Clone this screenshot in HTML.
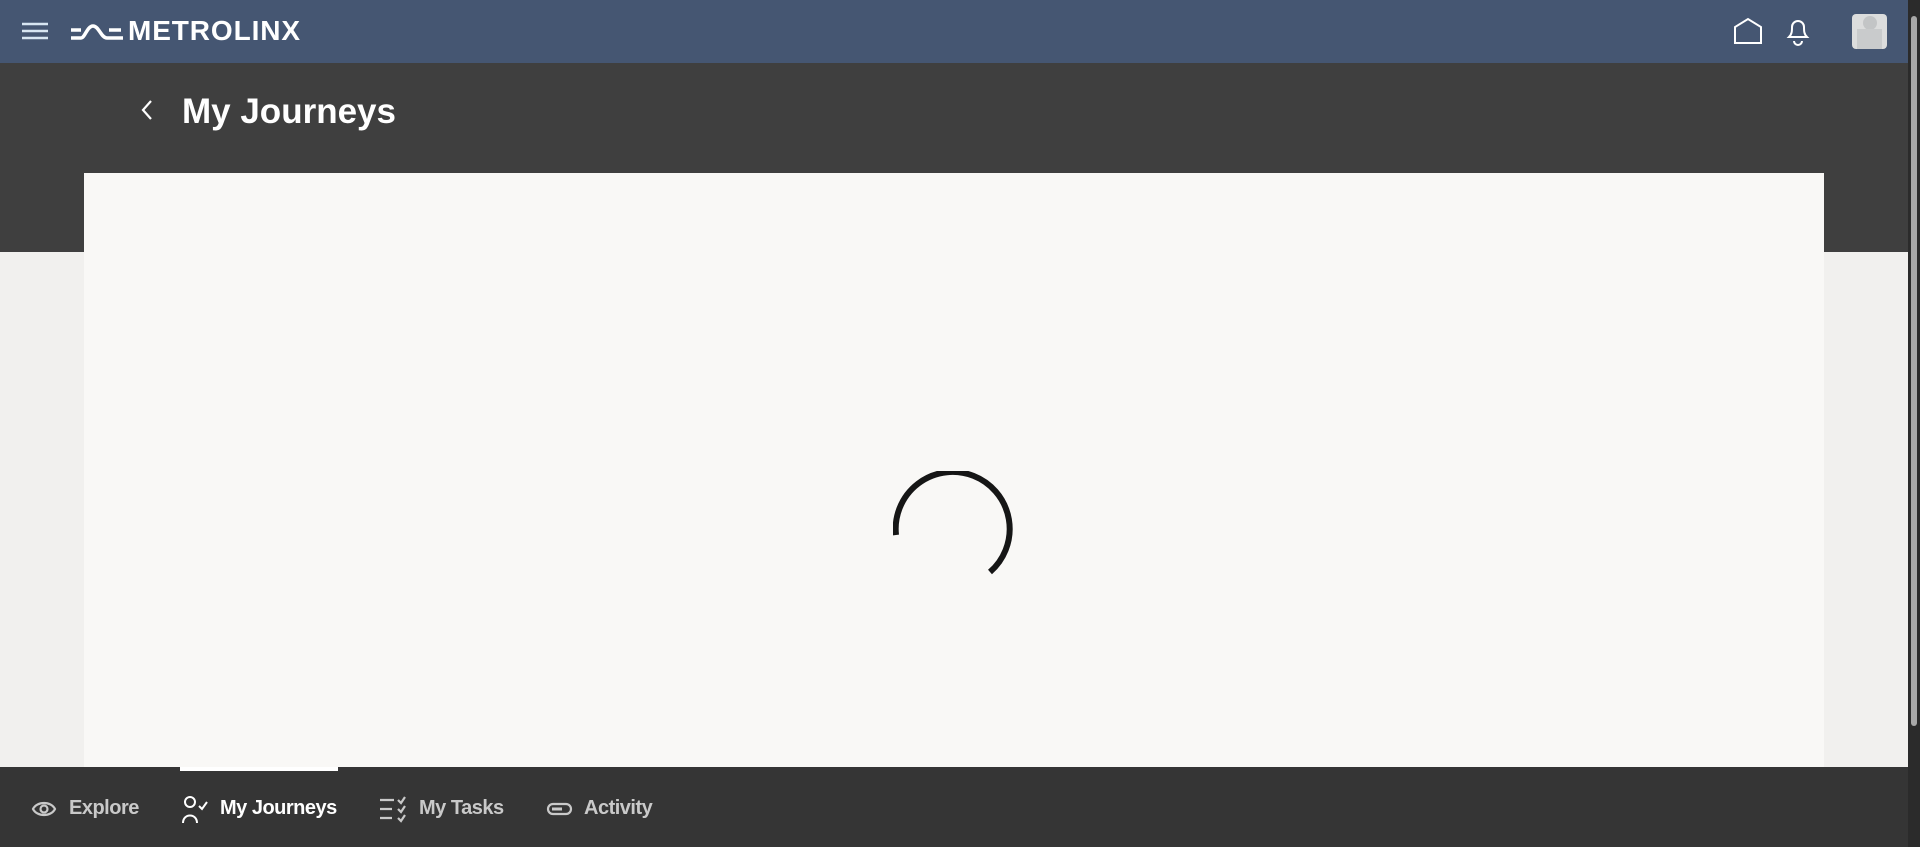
<!DOCTYPE html>
<html><head><style>
*{margin:0;padding:0;box-sizing:border-box}
body{width:1920px;height:847px;overflow:hidden;background:#f1f0ee;font-family:"Liberation Sans",sans-serif;position:relative}
.hdr{position:absolute;left:0;top:0;width:1908px;height:63px;background:#455672}
.band{position:absolute;left:0;top:63px;width:1908px;height:189px;background:#3f3f3f}
.card{position:absolute;left:84px;top:173px;width:1740px;height:594px;background:#f9f8f6}
.bot{position:absolute;left:0;top:767px;width:1908px;height:80px;background:#353535}
.sb{position:absolute;right:0;top:0;width:12px;height:847px;background:#2b2b2b}
.sb i{position:absolute;left:3px;top:16px;width:6px;height:710px;background:#a8a8a8;border-radius:3px}
.t{position:absolute;color:#fff;font-weight:bold}
.nav{position:absolute;top:797px;font-size:20px;color:#c9c9c9;font-weight:bold;letter-spacing:-0.5px}
</style></head><body>
<div class="hdr"></div><div class="band"></div><div class="card"></div><div class="bot"></div>
<div class="sb"><i></i></div>
<svg style="position:absolute;left:20px;top:20px" width="30" height="24"><g stroke="#d8e6f2" stroke-width="2.5"><line x1="2" y1="4" x2="28" y2="4"/><line x1="2" y1="11" x2="28" y2="11"/><line x1="2" y1="18" x2="28" y2="18"/></g></svg>
<svg style="position:absolute;left:71px;top:19px" width="52" height="24"><g fill="none" stroke="#fff" stroke-width="3.5"><path d="M0 11h10M0 19h10c4 0 6-12 12-12s8 12 14 12h16M38 11h12"/></g></svg>
<div class="t" style="left:128px;top:15px;font-size:28px;letter-spacing:0.9px">METROLINX</div>
<svg style="position:absolute;left:140px;top:98px" width="14" height="24"><path d="M11 3l-8 9 8 9" fill="none" stroke="#fff" stroke-width="2.2"/></svg>
<div class="t" style="left:182px;top:92px;font-size:35px">My Journeys</div>
<svg style="position:absolute;left:1733px;top:17px" width="30" height="28"><path d="M2 26V10L15 2l13 8v16z" fill="none" stroke="#fff" stroke-width="2"/></svg>
<svg style="position:absolute;left:1784px;top:16px" width="28" height="30"><path d="M5 21c3-3 3-6 3-10a6 6 0 0 1 12 0c0 4 0 7 3 10zM10 25a4 4 0 0 0 8 0" fill="none" stroke="#fff" stroke-width="2"/></svg>
<div style="position:absolute;left:1852px;top:14px;width:35px;height:35px;background:#dcdddd;border-radius:4px;overflow:hidden"><div style="position:absolute;left:11px;top:2px;width:14px;height:14px;border-radius:50%;background:#c3c5c6"></div><div style="position:absolute;left:5px;top:15px;width:25px;height:20px;background:#c9cbcc"></div></div>
<svg style="position:absolute;left:893px;top:471px" width="120" height="120"><path d="M3 64A57 57 0 1 1 97 101" fill="none" stroke="#161616" stroke-width="6"/></svg>
<div style="position:absolute;left:180px;top:767px;width:158px;height:4px;background:#fff"></div>
<svg style="position:absolute;left:31px;top:798px" width="26" height="22"><path d="M2 11C6 3 20 3 24 11 20 19 6 19 2 11z" fill="none" stroke="#c9c9c9" stroke-width="2.2"/><circle cx="13" cy="11" r="3.5" fill="none" stroke="#c9c9c9" stroke-width="2.2"/></svg>
<div class="nav" style="left:69px">Explore</div>
<svg style="position:absolute;left:181px;top:795px" width="30" height="30"><circle cx="9" cy="7" r="5" fill="none" stroke="#fff" stroke-width="2"/><path d="M2 28c0-10 14-10 14 0M18 11l3 3 5-7" fill="none" stroke="#fff" stroke-width="2"/></svg>
<div class="nav" style="left:220px;color:#fff">My Journeys</div>
<svg style="position:absolute;left:379px;top:796px" width="30" height="28"><g stroke="#c9c9c9" stroke-width="2.2" fill="none"><path d="M1 4h14M1 13h12M1 22h12M19 4l3 3 4-6M19 13l3 3 4-6M19 22l3 3 4-6"/></g></svg>
<div class="nav" style="left:419px">My Tasks</div>
<svg style="position:absolute;left:546px;top:801px" width="28" height="16"><rect x="2" y="3" width="23" height="10" rx="5" fill="none" stroke="#c9c9c9" stroke-width="2.2"/><path d="M6 8h10" stroke="#c9c9c9" stroke-width="3"/></svg>
<div class="nav" style="left:584px">Activity</div>
</body></html>
